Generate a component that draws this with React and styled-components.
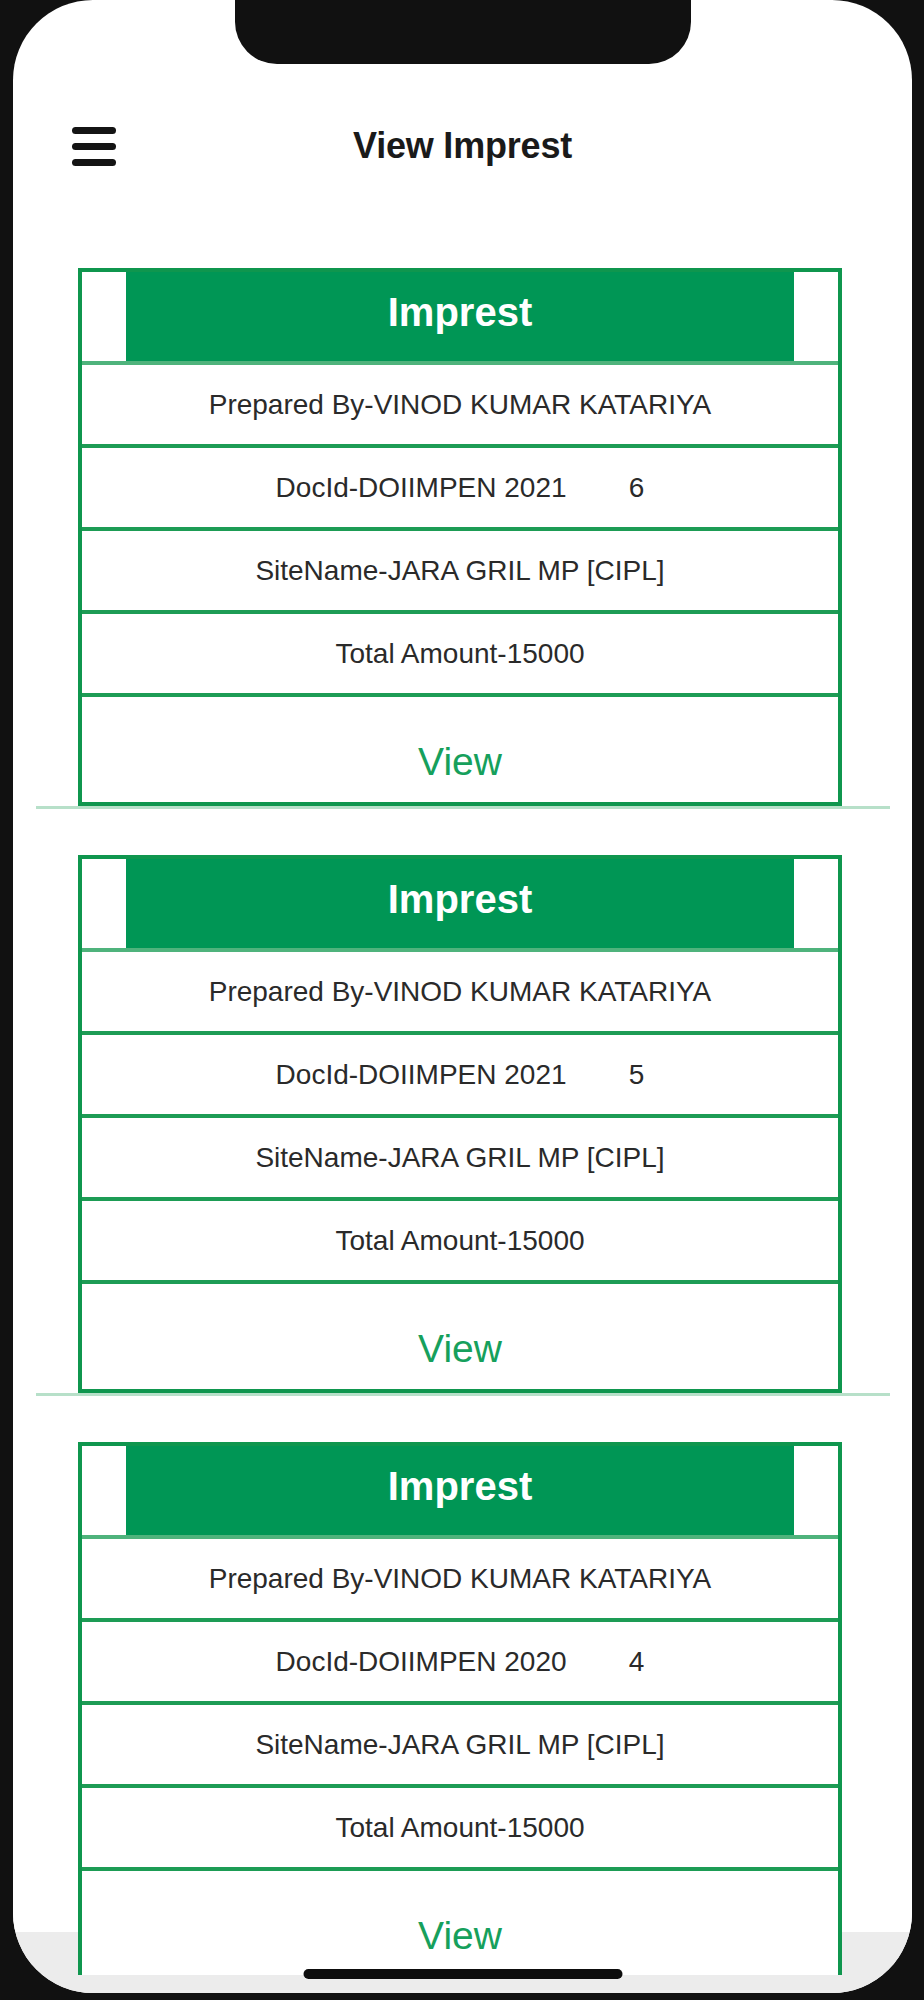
import React from "react";
import styled, { createGlobalStyle } from "styled-components";

const GREEN = "#0f964e";
const FILL = "#009655";
const ROW_LINE = "#1d9c55";

const Global = createGlobalStyle`
  html, body {
    margin: 0;
    padding: 0;
    background: #111;
    min-height: 2000px;
  }
  body {
    font-family: "Liberation Sans", Arial, sans-serif;
  }
`;

const Frame = styled.div`
  width: 924px;
  height: 2000px;
  background: #111;
  box-sizing: border-box;
  padding-left: 13px;
`;

const Screen = styled.div`
  position: relative;
  width: 899px;
  height: 1993px;
  background: #fff;
  border-radius: 80px;
  overflow: hidden;
  display: flex;
  flex-direction: column;
`;

const Notch = styled.div`
  position: absolute;
  top: 0;
  left: 50%;
  transform: translateX(-50%);
  width: 456px;
  height: 64px;
  background: #111;
  border-radius: 0 0 42px 42px;
  z-index: 3;
`;

const NavBar = styled.header`
  margin-top: 108px;
  height: 76px;
  flex: none;
  display: grid;
  grid-template-columns: 1fr auto 1fr;
  align-items: center;
  padding: 0 59px;
`;

const Burger = styled.div`
  display: flex;
  flex-direction: column;
  gap: 9px;
  width: 44px;
`;

const BurgerBar = styled.span`
  display: block;
  height: 7px;
  border-radius: 4px;
  background: #141414;
`;

const Title = styled.h1`
  margin: 0;
  font-family: "Liberation Sans", Arial, sans-serif;
  font-weight: 700;
  font-size: 36px;
  color: #1a1a1a;
  letter-spacing: -0.2px;
`;

const ScrollArea = styled.main`
  flex: 1;
  min-height: 0;
  overflow: hidden;
  padding: 84px 22px 0 23px;
  background: linear-gradient(
    to bottom,
    #fff calc(100% - 43px),
    #ececec calc(100% - 43px)
  );
`;

const Item = styled.section`
  display: flex;
  flex-direction: column;
  margin-bottom: 46px;
`;

const Card = styled.div`
  width: 764px;
  box-sizing: border-box;
  margin-left: 42px;
  border: 4px solid ${GREEN};
  background: #fff;
  display: flex;
  flex-direction: column;
`;

const CardHeader = styled.div`
  padding: 0 44px;
  border-bottom: 4px solid #4fb37c;
`;

const HeaderFill = styled.div`
  height: 89px;
  background: ${FILL};
  display: flex;
  align-items: center;
  justify-content: center;
  padding-bottom: 8px;
  box-sizing: border-box;
  color: #fff;
  font-weight: 700;
  font-size: 40px;
`;

const Row = styled.div`
  height: 79px;
  border-bottom: 4px solid ${ROW_LINE};
  display: flex;
  align-items: center;
  justify-content: center;
  font-size: 28px;
  color: #2a2a2a;
  white-space: pre;
`;

const ViewRow = styled.div`
  height: 105px;
  box-sizing: border-box;
  padding-top: 25px;
  display: flex;
  align-items: center;
  justify-content: center;
  font-size: 39px;
  color: #16a05c;
`;

const Separator = styled.hr`
  margin: 0;
  border: none;
  height: 3px;
  background: #b7e0c9;
`;

const SafeBottom = styled.div`
  flex: none;
  height: 18px;
  background: #ececec;
`;

const HomeIndicator = styled.div`
  position: absolute;
  left: 50%;
  bottom: 14px;
  transform: translateX(-50%);
  width: 319px;
  height: 10px;
  border-radius: 5px;
  background: #0d0d0d;
  z-index: 3;
`;

const items = [
  { year: "2021", no: "6" },
  { year: "2021", no: "5" },
  { year: "2020", no: "4" },
];

export default function App() {
  return (
    <>
      <Global />
      <Frame>
        <Screen>
          <Notch />
          <NavBar>
            <Burger>
              <BurgerBar />
              <BurgerBar />
              <BurgerBar />
            </Burger>
            <Title>View Imprest</Title>
            <span />
          </NavBar>
          <ScrollArea>
            {items.map((it) => (
              <Item key={it.no}>
                <Card>
                  <CardHeader>
                    <HeaderFill>Imprest</HeaderFill>
                  </CardHeader>
                  <Row>Prepared By-VINOD KUMAR KATARIYA</Row>
                  <Row>{`DocId-DOIIMPEN ${it.year}        ${it.no}`}</Row>
                  <Row>SiteName-JARA GRIL MP [CIPL]</Row>
                  <Row>Total Amount-15000</Row>
                  <ViewRow>View</ViewRow>
                </Card>
                <Separator />
              </Item>
            ))}
          </ScrollArea>
          <SafeBottom />
          <HomeIndicator />
        </Screen>
      </Frame>
    </>
  );
}
